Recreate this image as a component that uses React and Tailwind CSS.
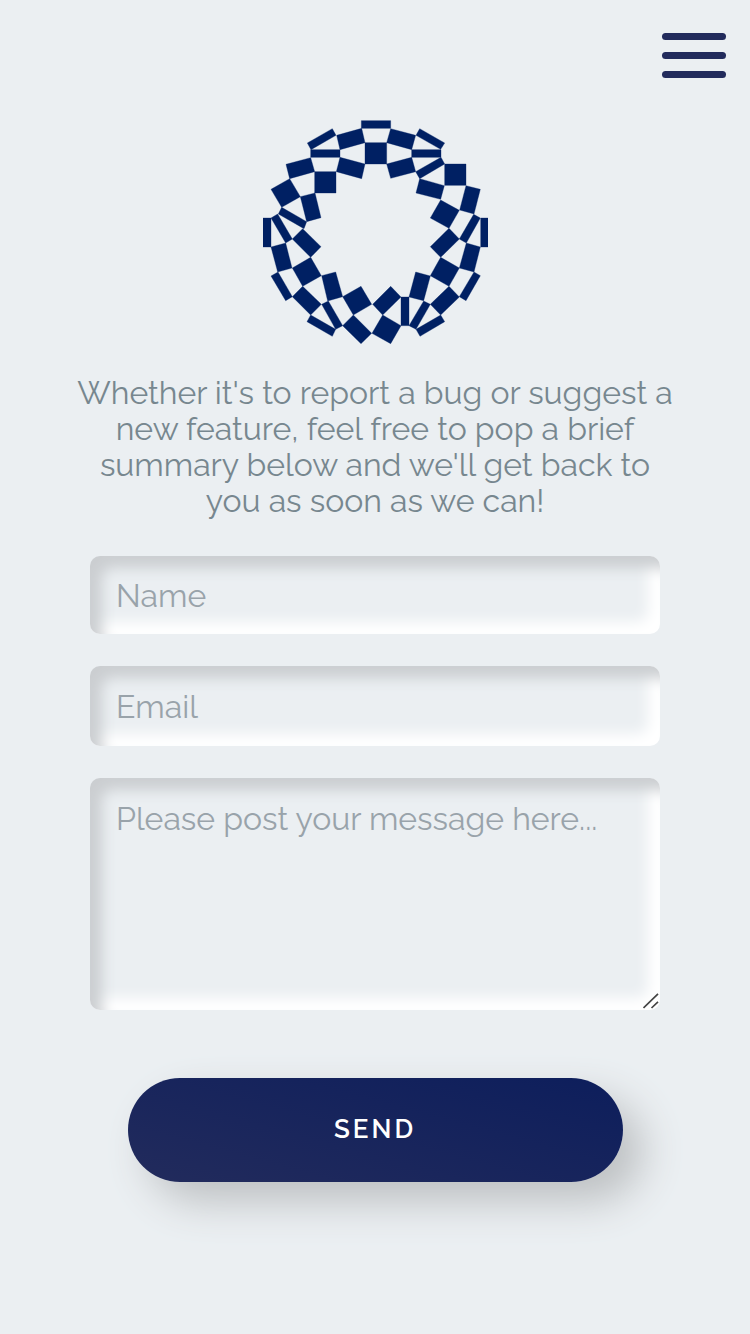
const TILES = [
  "319,32 407,32 407,55 319,55",
  "330,98 395,98 395,162 330,162",
  "245,76 320,55 330,98 255,119",
  "157,99 232,56 243,76 168,119",
  "167,119 255,119 255,142 167,142",
  "93,163 167,143 179,185 104,206",
  "255,142 330,162 320,206 244,185",
  "179,185 243,185 243,249 179,249",
  "48,238 104,206 136,260 80,292",
  "136,260 180,249 198,323 155,335",
  "80,292 155,335 147,356 70,312",
  "24,324 48,324 48,411 24,411",
  "48,324 68,312 112,387 92,399",
  "143,356 198,410 167,442 112,387",
  "48,411 92,399 111,474 68,486",
  "167,442 199,497 143,529 112,474",
  "48,498 69,486 112,560 92,572",
  "200,497 242,486 263,560 218,573",
  "143,529 199,583 167,615 112,560",
  "263,560 318,529 350,583 295,615",
  "200,583 220,573 263,647 242,658",
  "167,615 242,658 232,679 156,635",
  "295,615 350,670 318,701 263,647",
  "353,583 407,529 438,561 383,615",
  "383,615 438,647 407,701 351,670",
  "438,561 462,561 462,647 438,647",
  "482,486 526,498 506,572 462,561",
  "506,573 526,583 483,658 462,647",
  "557,615 569,635 495,679 483,658",
  "582,529 613,561 557,615 526,583",
  "557,442 613,474 582,529 526,497",
  "582,355 613,387 557,442 526,410",
  "634,399 676,411 657,486 613,474",
  "657,486 676,497 633,572 613,560",
  "613,387 634,399 676,324 656,313",
  "677,324 699,324 699,411 677,411",
  "407,56 482,76 470,119 395,98",
  "395,162 470,142 482,185 407,205",
  "494,56 569,99 557,118 483,76",
  "470,119 558,119 558,142 470,142",
  "558,142 569,162 494,206 482,185",
  "569,162 633,162 633,226 569,226",
  "494,206 568,227 557,268 483,249",
  "633,227 676,238 657,312 614,300",
  "557,270 613,301 582,355 526,324",
];

const FIELD =
  "block w-full appearance-none rounded-[10px] border-0 bg-[#ebeff2] px-[26px] text-[32px] leading-9 text-[#7f8f99] shadow-[inset_12px_12px_14px_#cbced1,inset_-12px_-12px_14px_#ffffff] outline-none placeholder:text-[#99a3aa] placeholder:opacity-100";

function Logo() {
  return (
    <svg
      role="img"
      aria-label="Chequered ring"
      viewBox="24 30 675 675"
      className="size-[225px] fill-[#002063] stroke-[#002063] stroke-1"
    >
      {TILES.map((points) => (
        <polygon key={points} points={points} />
      ))}
    </svg>
  );
}

function MenuButton() {
  return (
    <button type="button" aria-label="Menu" className="flex w-16 flex-col gap-3">
      <span className="h-[7px] w-full rounded-full bg-[#222b5c]" />
      <span className="h-[7px] w-full rounded-full bg-[#222b5c]" />
      <span className="h-[7px] w-full rounded-full bg-[#222b5c]" />
    </button>
  );
}

export default function App() {
  return (
    <div className="min-h-screen bg-[#ebeff2] font-['Raleway','Lato',sans-serif]">
      <header className="flex justify-end pt-[33px] pr-6">
        <MenuButton />
      </header>
      <main className="flex flex-col items-center pt-[42px] pb-20">
        <Logo />
        <p className="mt-[30px] w-[81%] text-center text-[32px] leading-9 text-[#77878f]">
          Whether it's to report a bug or suggest a new feature, feel free to
          pop a brief summary below and we'll get back to you as soon as we can!
        </p>
        <form
          className="mt-[37px] flex w-full flex-col items-center"
          onSubmit={(e) => e.preventDefault()}
        >
          <div className="flex w-[76%] flex-col gap-8">
            <input type="text" aria-label="Name" placeholder="Name" className={`${FIELD} h-[78px]`} />
            <input type="email" aria-label="Email" placeholder="Email" className={`${FIELD} h-20`} />
            <div className="relative">
              <textarea
                aria-label="Message"
                placeholder="Please post your message here..."
                className={`${FIELD} h-[232px] resize-none py-[23px]`}
              />
              <svg
                aria-hidden="true"
                viewBox="0 0 16 16"
                className="pointer-events-none absolute right-px bottom-px size-4 fill-none stroke-[#444444] stroke-[1.7]"
              >
                <path d="M0.5 15 L15 0.8 M8.5 15 L15 8.8" />
              </svg>
            </div>
          </div>
          <button
            type="submit"
            className="mt-[68px] h-[104px] w-[66%] rounded-full bg-[linear-gradient(15deg,#222b5c,#0d1e5c)] pb-[2px] text-[26px] font-semibold tracking-[3px] text-white shadow-[20px_20px_40px_#bec1c3]"
          >
            SEND
          </button>
        </form>
      </main>
    </div>
  );
}
